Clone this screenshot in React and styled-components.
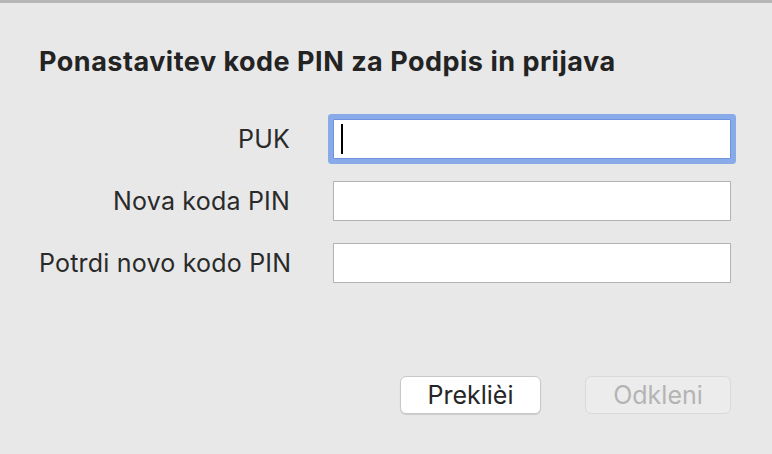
import styled, { createGlobalStyle } from 'styled-components';

const GlobalStyle = createGlobalStyle`
  html, body {
    margin: 0;
    padding: 0;
    background: #e8e8e8;
  }
  body {
    font-family: Inter, Roboto, "Noto Sans", "Liberation Sans", sans-serif;
    color: #262626;
  }
`;

const Sheet = styled.div`
  width: 772px;
  height: 454px;
  box-sizing: border-box;
  border-top: 3px solid #b6b6b6;
  background: #e8e8e8;
  display: flex;
  flex-direction: column;
  padding: 44px 41px 0 39px;
`;

const Title = styled.h1`
  margin: 0;
  font-size: 27px;
  font-weight: 700;
  line-height: 30px;
  letter-spacing: 0.5px;
  color: #232323;
`;

const Form = styled.div`
  display: grid;
  grid-template-columns: 251px 1fr;
  column-gap: 43px;
  row-gap: 22px;
  margin-top: 42px;
  align-items: center;
`;

const Label = styled.label`
  text-align: right;
  font-size: 25px;
  letter-spacing: 0.2px;
  color: #2a2a2a;
  white-space: nowrap;
`;

const Field = styled.div`
  position: relative;
  height: 40px;
  box-sizing: border-box;
  background: #fff;
  border: 1.5px solid ${(p) => (p.$focused ? '#6f93dc' : '#b3b3b3')};
  box-shadow: ${(p) => (p.$focused ? '0 0 0 5px #88aae8' : 'none')};
  border-radius: ${(p) => (p.$focused ? '1px' : '0')};
`;

const Caret = styled.span`
  position: absolute;
  left: 7px;
  top: 4px;
  width: 2px;
  height: 30px;
  background: #000;
`;

const Footer = styled.div`
  display: flex;
  justify-content: flex-end;
  gap: 44px;
  margin-top: 93px;
`;

const Button = styled.button`
  height: 38px;
  width: ${(p) => p.$w}px;
  box-sizing: border-box;
  font-family: inherit;
  font-size: 25px;
  border-radius: 6px;
  border: 1px solid ${(p) => (p.disabled ? '#dadada' : '#c9c9c9')};
  background: ${(p) => (p.disabled ? '#ececec' : '#ffffff')};
  color: ${(p) => (p.disabled ? '#b4b4b4' : '#262626')};
  box-shadow: ${(p) => (p.disabled ? 'none' : '0 1px 1px rgba(0,0,0,0.12)')};
  padding: 0;
`;

const rows = [
  { label: 'PUK', focused: true },
  { label: 'Nova koda PIN' },
  { label: 'Potrdi novo kodo PIN' },
];

export default function App() {
  return (
    <>
      <GlobalStyle />
      <Sheet>
        <Title>Ponastavitev kode PIN za Podpis in prijava</Title>
        <Form>
          {rows.map((r) => (
            <>
              <Label key={r.label + 'l'}>{r.label}</Label>
              <Field key={r.label + 'f'} $focused={r.focused}>
                {r.focused && <Caret />}
              </Field>
            </>
          ))}
        </Form>
        <Footer>
          <Button $w={141}>Preklièi</Button>
          <Button $w={146} disabled>
            Odkleni
          </Button>
        </Footer>
      </Sheet>
    </>
  );
}
